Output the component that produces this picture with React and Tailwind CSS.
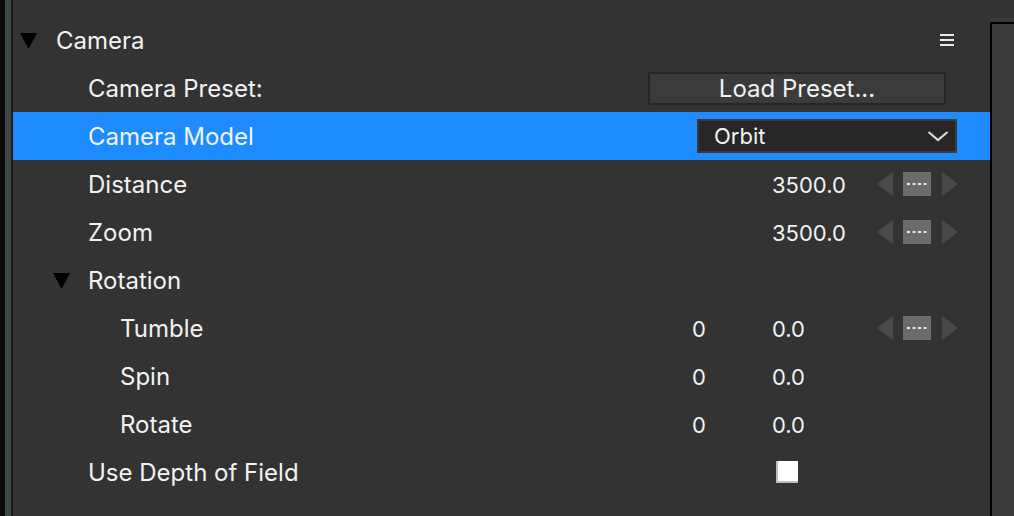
import { useState } from "react";

const font = { fontFamily: "Inter, 'Noto Sans', sans-serif" };

function Caret() {
    return (
        <svg width="17" height="17" viewBox="0 0 17 17" className="shrink-0">
            <polygon points="0,1 17,1 8.5,17" fill="#000" />
        </svg>
    );
}

function Stepper() {
    return (
        <div className="flex w-[81px] items-center">
            <svg width="16" height="24" viewBox="0 0 16 24">
                <polygon points="16,0 16,24 0,12" fill="#4a4a4a" />
            </svg>
            <div className="ml-[10px] flex h-[24px] w-[28px] items-center justify-center bg-[#6b6b6b]">
                <svg width="20" height="2" viewBox="0 0 20 2">
                    <rect x="0" y="0" width="3" height="2" fill="#e8e8e8" />
                    <rect x="5.5" y="0" width="3" height="2" fill="#e8e8e8" />
                    <rect x="11" y="0" width="3" height="2" fill="#e8e8e8" />
                    <rect x="16.5" y="0" width="3" height="2" fill="#e8e8e8" />
                </svg>
            </div>
            <svg width="16" height="24" viewBox="0 0 16 24" className="ml-[11px]">
                <polygon points="0,0 16,12 0,24" fill="#4a4a4a" />
            </svg>
        </div>
    );
}

function ValueRow({ label, indent, a, b, stepper }) {
    return (
        <div className="flex h-[48px] items-center">
            <span className="flex-1 pt-[2px]" style={{ paddingLeft: indent }}>
                {label}
            </span>
            <span className="w-[80px] pt-[2px] text-[22px]">{a}</span>
            <span className="w-[105px] pt-[2px] text-[22px]">{b}</span>
            <div className="w-[81px]">{stepper && <Stepper />}</div>
            <div className="w-[32px]" />
        </div>
    );
}

export default function App() {
    const [depth, setDepth] = useState(false);

    return (
        <div className="flex h-[516px] w-full overflow-hidden bg-[#333333] text-[24px] text-[#f2f2f2]" style={font}>
            {/* left window edge */}
            <div className="w-[5px] bg-[#0a0a0a]" />
            <div className="w-[6px] bg-[#3e4847]" />
            <div className="w-[2px] bg-[#1a1a1a]" />

            {/* property panel */}
            <main className="flex-1 pt-[16px]">
                <div className="flex h-[48px] items-center pl-[7px] pr-[36px]">
                    <Caret />
                    <span className="ml-[19px] flex-1 pt-[2px]">Camera</span>
                    <svg width="14" height="12" viewBox="0 0 14 12">
                        <rect x="0" y="0" width="14" height="2" fill="#ececec" />
                        <rect x="0" y="5" width="14" height="2" fill="#ececec" />
                        <rect x="0" y="10" width="14" height="2" fill="#ececec" />
                    </svg>
                </div>

                <div className="flex h-[48px] items-center pl-[75px] pr-[44px]">
                    <span className="flex-1 pt-[2px]">Camera Preset:</span>
                    <button className="h-[33px] w-[298px] rounded-[2px] border-2 border-[#262626] bg-[#3b3b3b] pt-[2px] leading-none text-[#f2f2f2]">
                        Load Preset...
                    </button>
                </div>

                <div className="flex h-[48px] items-center bg-[#1e8cff] pl-[75px] pr-[33px]">
                    <span className="flex-1 pt-[2px]">Camera Model</span>
                    <div className="flex h-[34px] w-[260px] items-center border-2 border-[#3a3a3a] bg-[#262626] pl-[15px] pr-[6px]">
                        <span className="flex-1 text-[22px]">Orbit</span>
                        <svg width="22" height="12" viewBox="0 0 22 12">
                            <polyline points="1.5,2 11,10 20.5,2" fill="none" stroke="#d8d8d8" strokeWidth="2.2" />
                        </svg>
                    </div>
                </div>

                <ValueRow label="Distance" indent={75} b="3500.0" stepper />
                <ValueRow label="Zoom" indent={75} b="3500.0" stepper />

                <div className="flex h-[48px] items-center pl-[40px]">
                    <Caret />
                    <span className="ml-[18px] pt-[2px]">Rotation</span>
                </div>

                <ValueRow label="Tumble" indent={107} a="0" b="0.0" stepper />
                <ValueRow label="Spin" indent={107} a="0" b="0.0" />
                <ValueRow label="Rotate" indent={107} a="0" b="0.0" />

                <div className="flex h-[48px] items-center">
                    <span className="flex-1 pl-[75px] pt-[2px]">Use Depth of Field</span>
                    <div className="w-[80px]" />
                    <div className="w-[105px] pl-[4px]">
                        <button
                            onClick={() => setDepth(!depth)}
                            className="block h-[22px] w-[22px] border-b-2 border-l-2 border-[#bdbdbd] bg-white"
                        />
                    </div>
                    <div className="w-[113px]" />
                </div>
            </main>

            {/* neighbouring panel */}
            <div className="flex w-[24px] flex-col">
                <div className="h-[18px]" />
                <div className="h-[4px] bg-[#383838]" />
                <div className="flex-1 border-l-2 border-t-2 border-black bg-[#3a3a3a]" />
            </div>
        </div>
    );
}
